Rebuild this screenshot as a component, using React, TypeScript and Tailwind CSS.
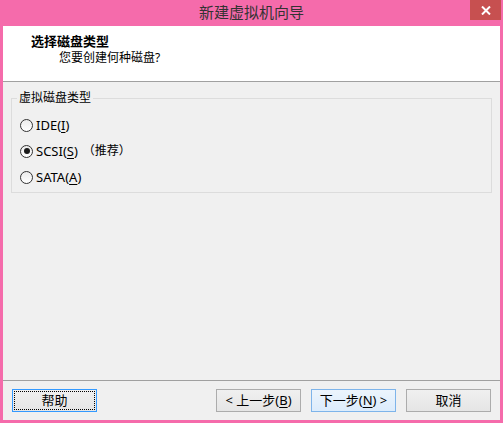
const font = { fontFamily: '"Noto Sans", "Noto Sans CJK SC", sans-serif' };

function Radio({ checked, label, hotkey, extra }: { checked?: boolean; label: string; hotkey: string; extra?: string }) {
  return (
    <div className="flex h-[26px] items-center pl-[8px]">
      <span className="flex h-[13px] w-[13px] items-center justify-center rounded-full border border-[#333333] bg-gradient-to-b from-[#ececec] to-white">
        {checked && <span className="h-[6px] w-[6px] rounded-full bg-[#1a1a1a]" />}
      </span>
      <span className="ml-[3px] text-[13px] leading-none text-black">
        {label}(<span className="underline underline-offset-2">{hotkey}</span>)
      </span>
      {extra && <span className="ml-[5px] text-[12px] leading-none text-black">{extra}</span>}
    </div>
  );
}

function Button({ children, variant }: { children: React.ReactNode; variant?: "focus" | "default" }) {
  if (variant === "focus") {
    return (
      <div className="h-[23px] w-[85px] border border-[#3399ff] bg-gradient-to-b from-[#f0f0f0] to-[#e5e5e5] p-[1px]">
        <div className="flex h-full w-full items-center justify-center border border-dotted border-black text-[13px] text-black">
          {children}
        </div>
      </div>
    );
  }
  return (
    <div
      className={
        variant === "default"
          ? "flex h-[23px] w-[85px] items-center justify-center border border-[#7eb4ea] bg-gradient-to-b from-[#ecf4fc] to-[#dcecfc] text-[13px] text-black"
          : "flex h-[23px] w-[85px] items-center justify-center border border-[#acacac] bg-gradient-to-b from-[#f0f0f0] to-[#e5e5e5] text-[13px] text-black"
      }
    >
      {children}
    </div>
  );
}

export default function App() {
  return (
    <div className="flex h-[423px] w-[503px] flex-col bg-[#f56bab]" style={font}>
      {/* title bar */}
      <div className="flex h-[26px] shrink-0">
        <div className="w-[33px]" />
        <div className="flex flex-1 items-center justify-center pb-[1px] text-[15px] text-[#333333]">
          新建虚拟机向导
        </div>
        <div className="mr-[2px] flex h-[20px] w-[31px] items-center justify-center bg-[#c75050]">
          <svg width="10" height="9" viewBox="0 0 10 9">
            <path d="M1 0.5 L9 8.5 M9 0.5 L1 8.5" stroke="white" strokeWidth="2" />
          </svg>
        </div>
      </div>

      {/* client area */}
      <div className="mx-[3px] mb-[3px] flex flex-1 flex-col bg-[#f0f0f0]">
        <div className="h-[56px] shrink-0 border-b border-[#a0a0a0] bg-white pt-[7px]">
          <div className="pl-[28px] text-[13px] font-bold leading-[16px] text-black">选择磁盘类型</div>
          <div className="mt-[1px] pl-[56px] text-[12px] leading-[16px] text-black">您要创建何种磁盘?</div>
        </div>

        <div className="relative mx-[8px] mt-[16px] h-[95px] border border-[#dcdcdc]">
          <span className="absolute -top-[9px] left-[5px] bg-[#f0f0f0] px-[2px] text-[12px] leading-[16px] text-black">
            虚拟磁盘类型
          </span>
          <div className="pt-[13px]">
            <Radio label="IDE" hotkey="I" />
            <Radio checked label="SCSI" hotkey="S" extra="（推荐）" />
            <Radio label="SATA" hotkey="A" />
          </div>
        </div>

        <div className="flex-1" />

        <div className="flex h-[40px] shrink-0 items-center border-t border-[#a0a0a0] px-[9px]">
          <Button variant="focus">帮助</Button>
          <div className="flex-1" />
          <div className="flex gap-[10px]">
            <Button>
              &lt; 上一步(<span className="underline underline-offset-2">B</span>)
            </Button>
            <Button variant="default">
              下一步(<span className="underline underline-offset-2">N</span>) &gt;
            </Button>
            <Button>取消</Button>
          </div>
        </div>
      </div>
    </div>
  );
}
